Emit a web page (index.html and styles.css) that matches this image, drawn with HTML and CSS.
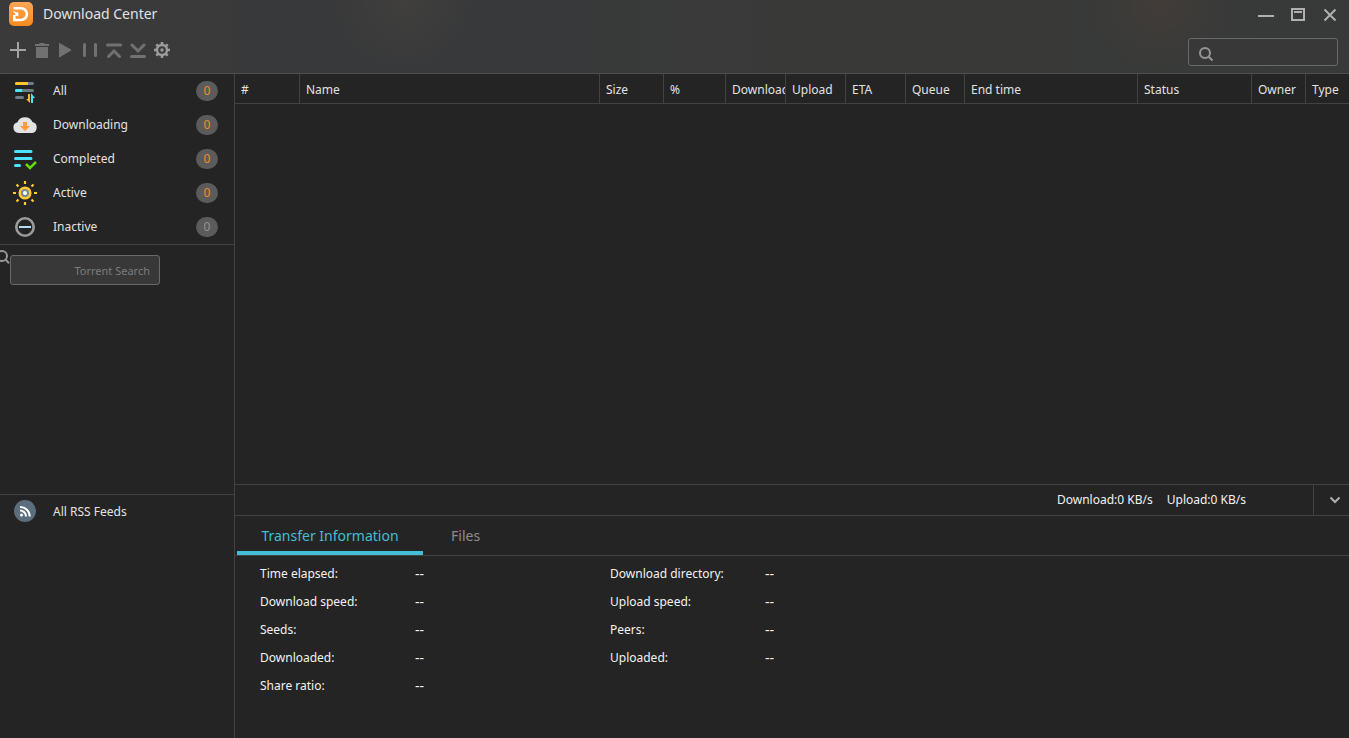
FILE: index.html
```html
<!DOCTYPE html>
<html lang="en">
<head>
<meta charset="utf-8">
<title>Download Center</title>
<link rel="stylesheet" href="styles.css">
</head>
<body>
<div class="app">
  <header class="header">
    <div class="titlebar">
      <svg class="logo" width="24" height="24" viewBox="0 0 24 24" aria-hidden="true">
        <defs><linearGradient id="orange" x1="0" y1="0" x2="0" y2="1"><stop offset="0" stop-color="#ffa557"/><stop offset="1" stop-color="#f68a1e"/></linearGradient></defs>
        <rect width="24" height="24" rx="5" fill="url(#orange)"/>
        <path d="M4.500 6.200h7.500a5.900 5.900 0 0 1 0 11.800H5.300v-5" fill="none" stroke="#fff" stroke-width="2.600"/>
        <path d="M3.600 8.200l4 2.500 1.300-1 .8 4.600-4.500-.5 1.400-1.300z" fill="#fff"/>
      </svg>
      <h1 class="title">Download Center</h1>
      <div class="window-controls">
        <button class="window-button" type="button" aria-label="Minimize"><svg width="16" height="16" viewBox="0 0 16 16"><path d="M0 10h16" stroke="#b0b0b0" stroke-width="2"/></svg></button>
        <button class="window-button" type="button" aria-label="Maximize"><svg width="16" height="16" viewBox="0 0 16 16"><path d="M2 3h12v11H2zM4 6h8" fill="none" stroke="#b0b0b0" stroke-width="2"/></svg></button>
        <button class="window-button" type="button" aria-label="Close"><svg width="16" height="16" viewBox="0 0 16 16"><path d="M2.500 3.500l11 11m0-11l-11 11" stroke="#b0b0b0" stroke-width="2"/></svg></button>
      </div>
    </div>
    <div class="toolbar">
      <div class="actions">
        <button class="tool" type="button" aria-label="Add"><svg width="16" height="16" viewBox="0 0 16 16"><path d="M8 0v16M0 8h16" stroke="#a3a3a3" stroke-width="2"/></svg></button>
        <button class="tool" type="button" aria-label="Delete"><svg width="16" height="16" viewBox="0 0 16 16"><path d="M1 2h4l1-1h4l1 1h4v2H1zM2 5h12v10a2 2 0 0 1-2 2H4a2 2 0 0 1-2-2z" fill="#717171"/></svg></button>
        <button class="tool" type="button" aria-label="Start"><svg width="16" height="16" viewBox="0 0 16 16"><path d="M1.500 1.500l11.500 6.500-11.500 7z" fill="#717171" stroke="#717171" stroke-linejoin="round"/></svg></button>
        <button class="tool" type="button" aria-label="Pause"><svg width="16" height="16" viewBox="0 0 16 16"><path d="M2.500 2.500v11m11-11v11" stroke="#717171" stroke-width="3" stroke-linecap="round"/></svg></button>
        <button class="tool" type="button" aria-label="Move to top"><svg width="16" height="16" viewBox="0 0 16 16"><path d="M1.500 3h13M2.500 14.500L8 9l5.500 5.500" fill="none" stroke="#717171" stroke-width="3" stroke-linecap="round"/></svg></button>
        <button class="tool" type="button" aria-label="Move to bottom"><svg width="16" height="16" viewBox="0 0 16 16"><path d="M2 3l6 6 6-6M1.500 14.500h13" fill="none" stroke="#717171" stroke-width="3" stroke-linecap="round"/></svg></button>
        <button class="tool" type="button" aria-label="Settings"><svg width="16" height="16" viewBox="0 0 16 16"><g fill="none" stroke="#9c9c9c"><circle cx="8" cy="8" r="5" stroke-width="2.500"/><circle cx="8" cy="8" r="1" stroke-width="1.500"/><path d="M8 0v3m0 10v3M0 8h3m10 0h3M2.300 2.300l2.200 2.200m7 7l2.200 2.200m0-11.400l-2.200 2.200m-7 7l-2.200 2.200" stroke-width="2.600"/></g></svg></button>
      </div>
      <label class="search">
        <svg width="16" height="16" viewBox="0 0 16 16" aria-hidden="true"><path d="M10.500 10.500l4 4" stroke="#969696" stroke-width="2"/><circle cx="7" cy="7" r="5" fill="none" stroke="#969696" stroke-width="2"/></svg>
        <input class="search-input" type="text" aria-label="Search downloads">
      </label>
    </div>
  </header>

  <div class="body">
    <aside class="sidebar">
      <nav class="filters" aria-label="Filters">
        <a class="nav-item" href="#all">
          <svg width="24" height="24" viewBox="0 0 24 24"><path d="M3.500 4.500h16M3.500 11.500h16M3.500 18.500h6" stroke="#6f7d87" stroke-width="3" stroke-linecap="round"/><path d="M3.500 4.500h1" stroke="#ffc529" stroke-width="3" stroke-linecap="round"/><path d="M3.500 4.500h11.500" stroke="#ffc529" stroke-width="3"/><path d="M3.500 11.500h1" stroke="#4be4ff" stroke-width="3" stroke-linecap="round"/><path d="M3.500 11.500h5.500" stroke="#4be4ff" stroke-width="3"/><path d="M15 15h2v9l-4-4h2z" fill="#ffb62b"/><path d="M18 14l4 5h-2v5h-2z" fill="#4be4ff"/></svg>
          <span class="nav-label">All</span><span class="count">0</span></a>
        <a class="nav-item" href="#downloading">
          <svg width="24" height="24" viewBox="0 0 24 24"><path d="M5.500 20a5.500 5.500 0 0 1-1-10.800A8 7.500 0 0 1 19.500 9 5.600 5.600 0 0 1 18.500 20z" fill="#e2e2e2"/><path d="M10 9h4v4h3l-5 5-5-5h3z" fill="#ff9c36"/></svg>
          <span class="nav-label">Downloading</span><span class="count">0</span></a>
        <a class="nav-item" href="#completed">
          <svg width="24" height="24" viewBox="0 0 24 24"><path d="M2.500 4.500h15.500M2.500 11.500h15.500M2.500 18.500h4" stroke="#4be4ff" stroke-width="3" stroke-linecap="round"/><path d="M13 17l4 4 6-6" fill="none" stroke="#63dc0b" stroke-width="2.500"/></svg>
          <span class="nav-label">Completed</span><span class="count">0</span></a>
        <a class="nav-item" href="#active">
          <svg width="24" height="24" viewBox="0 0 24 24"><path d="M12 0v3m0 18v3M0 12h3m18 0h3M3.500 3.500l2 2m13 13l2 2m0-17l-2 2m-13 13l-2 2" stroke="#ffc938" stroke-width="2.200"/><circle cx="12" cy="12" r="5.300" fill="#7d8990" stroke="#ffc938" stroke-width="2.500"/><circle cx="12" cy="12" r="2" fill="#fff"/></svg>
          <span class="nav-label">Active</span><span class="count">0</span></a>
        <a class="nav-item" href="#inactive">
          <svg width="24" height="24" viewBox="0 0 24 24"><circle cx="12" cy="12" r="8.700" fill="none" stroke="#9b9b9b" stroke-width="2.600"/><path d="M6 12h12" stroke="#b2dcf4" stroke-width="2"/></svg>
          <span class="nav-label">Inactive</span><span class="count count-muted">0</span></a>
      </nav>
      <section class="torrent">
        <svg class="torrent-icon" width="16" height="16" viewBox="0 0 16 16" aria-hidden="true"><path d="M10.500 10.500l3.500 3.700" stroke="#969696" stroke-width="2"/><circle cx="7" cy="7" r="5" fill="none" stroke="#969696" stroke-width="2"/></svg>
        <input class="torrent-input" type="text" placeholder="Torrent Search" aria-label="Torrent Search">
      </section>
      <nav class="feeds" aria-label="Feeds">
        <a class="nav-item" href="#rss">
          <svg width="24" height="24" viewBox="0 0 24 24"><circle cx="12" cy="11" r="11" fill="#5c6e7d"/><g fill="none" stroke="#fff" stroke-width="2"><path d="M7 10.500a6 6 0 0 1 6 6M7 7a9.500 9.500 0 0 1 9.800 9.500"/></g><circle cx="8.500" cy="15" r="1.500" fill="#fff"/></svg>
          <span class="nav-label">All RSS Feeds</span></a>
      </nav>
    </aside>

    <main class="main">
      <div class="list">
        <table class="table">
          <colgroup><col class="c-num"><col class="c-name"><col class="c-size"><col class="c-pct"><col class="c-rate"><col class="c-rate"><col class="c-rate"><col class="c-queue"><col class="c-end"><col class="c-status"><col class="c-owner"><col class="c-type"></colgroup>
          <thead><tr><th>#</th><th>Name</th><th>Size</th><th>%</th><th>Download</th><th>Upload</th><th>ETA</th><th>Queue</th><th>End time</th><th>Status</th><th>Owner</th><th>Type</th></tr></thead>
        </table>
      </div>
      <div class="status">
        <span>Download:0 KB/s</span>
        <span>Upload:0 KB/s</span>
        <button class="collapse" type="button" aria-label="Collapse details"><svg width="12" height="12" viewBox="0 0 12 12"><path d="M1.500 3.500L6 8l4.500-4.500" fill="none" stroke="#b0b0b0" stroke-width="2"/></svg></button>
      </div>
      <div class="tabs" role="tablist">
        <button class="tab tab-active" type="button" role="tab" aria-selected="true">Transfer Information</button>
        <button class="tab" type="button" role="tab" aria-selected="false">Files</button>
      </div>
      <section class="details">
        <dl class="facts">
          <dt>Time elapsed:</dt><dd>--</dd>
          <dt>Download speed:</dt><dd>--</dd>
          <dt>Seeds:</dt><dd>--</dd>
          <dt>Downloaded:</dt><dd>--</dd>
          <dt>Share ratio:</dt><dd>--</dd>
        </dl>
        <dl class="facts">
          <dt>Download directory:</dt><dd>--</dd>
          <dt>Upload speed:</dt><dd>--</dd>
          <dt>Peers:</dt><dd>--</dd>
          <dt>Uploaded:</dt><dd>--</dd>
        </dl>
      </section>
    </main>
  </div>
</div>
</body>
</html>
```
FILE: styles.css
```css
* { box-sizing: border-box; }
body {
  margin: 0;
  background: #242424;
  color: #e2e2e2;
  font: 12px/20px "Noto Sans", "Open Sans", sans-serif;
}
button, input { font: inherit; color: inherit; }
button { padding: 0; border: 0; background: none; }
svg { display: block; flex: none; }
.app { display: flex; flex-direction: column; min-height: 100vh; }

.header {
  border-bottom: 1px solid #4e4f4f;
  background:
    radial-gradient(circle at 30% 0, #403f3d, transparent 70px),
    radial-gradient(circle at 86% 0, #423c38, transparent 70px),
    linear-gradient(90deg, #3a3a3a, #38393b 35%, #393a38 60%, #383a39);
}
.titlebar { display: flex; align-items: center; height: 28px; padding: 0 11px 0 9px; }
.title { margin: 0 auto 0 10px; font-size: 14px; font-weight: 400; }
.window-controls { display: flex; gap: 16px; }
.toolbar { display: flex; align-items: flex-start; justify-content: space-between; height: 45px; padding: 10px 11px 0 10px; }
.actions { display: flex; gap: 8px; padding-top: 4px; }
.search {
  display: flex;
  align-items: center;
  gap: 8px;
  width: 150px;
  height: 28px;
  padding: 3px 9px 0;
  border: 1px solid #696969;
  border-radius: 3px;
  background: #383838;
}
.search-input { flex: 1; min-width: 0; padding: 0; border: 0; outline: 0; background: none; }

.body { display: flex; flex: 1; }
.sidebar { display: flex; flex-direction: column; width: 235px; border-right: 1px solid #424242; }
.nav-item {
  display: flex;
  align-items: center;
  height: 34px;
  padding: 0 16px 0 13px;
  color: inherit;
  text-decoration: none;
}
.nav-label { flex: 1; margin-left: 16px; }
.count {
  width: 22px;
  border-radius: 10px;
  background: #5b5b5b;
  color: #f28c28;
  text-align: center;
}
.count-muted { color: #949494; }
.torrent {
  position: relative;
  flex: 1;
  padding: 10px;
  border-top: 1px solid #424242;
}
.torrent-icon { position: absolute; top: 4px; left: -5px; }
.torrent-input {
  display: block;
  width: 150px;
  height: 30px;
  padding: 0 9px;
  border: 1px solid #696969;
  border-radius: 3px;
  background: #383838;
  font-size: 11px;
  text-align: right;
}
.torrent-input::placeholder { color: #7c7c7c; opacity: 1; }
.feeds { min-height: 244px; border-top: 1px solid #424242; }

.main { display: flex; flex: 1; flex-direction: column; min-width: 0; }
.list { flex: 1; }
.table { width: 100%; border-collapse: separate; border-spacing: 0; table-layout: fixed; }
.table th {
  height: 30px;
  padding: 2px 0 0 6px;
  overflow: hidden;
  border-right: 1px solid #424242;
  border-bottom: 1px solid #424242;
  font-weight: 400;
  text-align: left;
  white-space: nowrap;
}
.table th:last-child { border-right: 0; }
.c-num { width: 65px; }
.c-size { width: 64px; }
.c-pct { width: 62px; }
.c-rate { width: 60px; }
.c-queue { width: 59px; }
.c-end { width: 173px; }
.c-status { width: 114px; }
.c-owner { width: 54px; }
.c-type { width: 43px; }

.status {
  display: flex;
  align-items: center;
  justify-content: flex-end;
  gap: 14px;
  height: 31px;
  border-top: 1px solid #424242;
  color: #f2f2f2;
}
.collapse {
  display: flex;
  align-items: center;
  align-self: stretch;
  width: 36px;
  margin-left: 53px;
  padding-left: 15px;
  border-left: 1px solid #424242;
}
.tabs {
  display: flex;
  height: 41px;
  padding-left: 2px;
  border-top: 1px solid #424242;
  border-bottom: 1px solid #424242;
}
.tab { padding: 4px 28px 0; border-bottom: 4px solid transparent; color: #8d8d8d; font-size: 14px; }
.tab-active { width: 186px; padding: 4px 0 0; border-color: #44bdd6; color: #44bdd6; }
.details { display: flex; min-height: 182px; padding: 4px 25px 0; color: #f2f2f2; }
.facts {
  display: grid;
  grid-template-columns: 155px 1fr;
  grid-auto-rows: 28px;
  align-items: center;
  align-content: start;
  width: 350px;
  margin: 0;
}
.facts dd { margin: 0; font-size: 14px; }
```
